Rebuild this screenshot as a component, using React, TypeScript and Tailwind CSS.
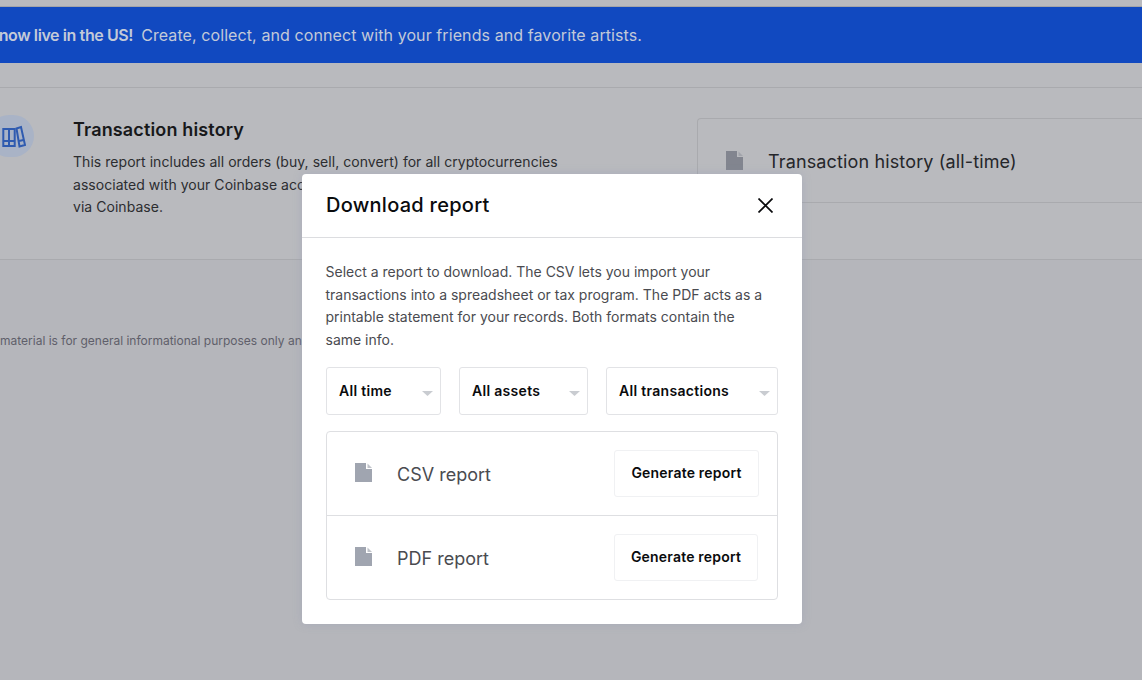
const FileIcon = ({ body, fold }: { body: string; fold: string }) => (
    <svg width="17" height="19" viewBox="0 0 17 19" className="shrink-0">
        <path d="M0 0H11V6H17V19H0Z" fill={body} />
        <path d="M12.5 0.5L17 5H12.5Z" fill={fold} />
    </svg>
);

const Caret = () => (
    <svg width="11" height="5" viewBox="0 0 11 5" className="shrink-0 mt-[4px]">
        <path d="M0 0H11L5.5 5Z" fill="#c9ccd1" />
    </svg>
);

const BooksIcon = () => (
    <svg width="24" height="23" viewBox="0 0 24 23" fill="none" stroke="#2f5bb0" strokeWidth="2">
        <path d="M1.3 4H12.7V21H1.3Z" />
        <path d="M7 4V21" />
        <path d="M1.3 16H12.7" />
        <path d="M14.5 3.5L19 2L23 20L17.5 21.5Z" />
        <path d="M17 16L21.5 15" />
    </svg>
);

const selects = [
    { label: "All time", width: "w-[115px]" },
    { label: "All assets", width: "w-[129px]" },
    { label: "All transactions", width: "w-[172px]" },
];

const reports = [
    { label: "CSV report", row: "h-[84px] pr-[18px]", button: "w-[145px]" },
    { label: "PDF report", row: "h-[83px] pr-[19px]", button: "w-[144px]" },
];

export default function App() {
    return (
        <div className="relative w-[1142px] h-[680px] overflow-hidden bg-[#b5b6bb] font-['Inter','Noto_Sans',sans-serif]">
            {/* page behind the dialog */}
            <div className="bg-[#b9babe]">
                <div className="h-[7px] border-b border-[#a3a4a8]" />
                <div className="h-[56px] bg-[#1149c0]">
                    <div className="h-full w-[642px] flex items-center justify-end whitespace-nowrap text-[16px] tracking-[0.09px] text-[#c3cad8]">
                        <span className="font-semibold tracking-[-0.4px] mr-2">Coinbase NFT is now live in the US!</span>
                        <span>Create, collect, and connect with your friends and favorite artists.</span>
                    </div>
                </div>

                <div className="mt-[24px] h-[173px] border-y border-[#a9aaae] flex">
                    <div className="w-[697px] shrink-0 flex">
                        <div className="w-[46px] h-[42px] -ml-[12px] mt-[27px] rounded-full bg-[#a9b3c6] flex items-center justify-center shrink-0 pl-[6px] pt-[1px]">
                            <BooksIcon />
                        </div>
                        <div className="ml-[39px] pt-[29px] w-[510px]">
                            <h2 className="text-[18px] leading-[26px] font-semibold tracking-[0.15px] text-[#17181a]">Transaction history</h2>
                            <p className="mt-[8px] text-[14px] leading-[22.5px] tracking-[0.04px] text-[#2c2d30]">
                                This report includes all orders (buy, sell, convert) for all cryptocurrencies
                                <br />
                                associated with your Coinbase account and all transactions made
                                <br />
                                via Coinbase.
                            </p>
                        </div>
                    </div>
                    <div className="flex-1 mt-[30px] h-[85px] border-y border-l border-[#a9aaae] rounded-tl-[4px] flex items-center pl-[28px] gap-[25px]">
                        <FileIcon body="#82858f" fold="#a2a4ab" />
                        <span className="mt-[2px] text-[18px] tracking-[0.14px] text-[#25262a]">Transaction history (all-time)</span>
                    </div>
                </div>
            </div>

            <p className="mt-[72px] whitespace-nowrap text-[12px] leading-[18px] text-[#5f5f6a]">
                material is for general informational purposes only and is not intended as financial advice.
            </p>

            {/* dialog */}
            <div className="absolute left-[302px] top-[174px] w-[500px] h-[450px] bg-white rounded-[4px] shadow-[0_0_8px_rgba(140,150,180,0.35)]">
                <div className="h-[64px] pl-[24px] pr-[29px] border-b border-[#dcdde0] flex items-center justify-between">
                    <h1 className="-mt-[2px] text-[20px] font-medium tracking-[0.27px] text-[#0a0b0d]">Download report</h1>
                    <svg width="15" height="15" viewBox="0 0 15 15" stroke="#0a0b0d" strokeWidth="1.7" className="-mt-[1px]">
                        <path d="M0.5 0.5L14.5 14.5M14.5 0.5L0.5 14.5" />
                    </svg>
                </div>
                <div className="px-[24px] pt-[23px]">
                    <p className="-ml-[0.5px] text-[14px] leading-[22.5px] text-[#4a4b50]">
                        Select a report to download. The CSV lets you import your
                        <br />
                        transactions into a spreadsheet or tax program. The PDF acts as a
                        <br />
                        printable statement for your records. Both formats contain the
                        <br />
                        same info.
                    </p>
                    <div className="mt-[16px] flex justify-between">
                        {selects.map((s) => (
                            <div
                                key={s.label}
                                className={`${s.width} h-[48px] border border-[#e2e3e6] rounded-[3px] pl-[12px] pr-[7px] flex items-center justify-between`}
                            >
                                <span className="-mt-[2px] text-[14px] font-semibold tracking-[0.3px] text-[#0a0b0d]">{s.label}</span>
                                <Caret />
                            </div>
                        ))}
                    </div>
                    <div className="mt-[16px] border border-[#dedfe2] rounded-[4px] divide-y divide-[#dedfe2]">
                        {reports.map((r) => (
                            <div key={r.label} className={`${r.row} flex items-start pl-[28px]`}>
                                <div className="mt-[31px]">
                                    <FileIcon body="#a0a5b0" fold="#c0c3ca" />
                                </div>
                                <span className="ml-[25px] mt-[29px] text-[18px] leading-[28px] text-[#4a4b50]">{r.label}</span>
                                <button className={`${r.button} ml-auto mt-[18px] h-[47px] pb-[2px] border border-[#f0f1f3] rounded-[3px] text-[14px] font-semibold tracking-[0.2px] text-[#0a0b0d]`}>
                                    Generate report
                                </button>
                            </div>
                        ))}
                    </div>
                </div>
            </div>
        </div>
    );
}
